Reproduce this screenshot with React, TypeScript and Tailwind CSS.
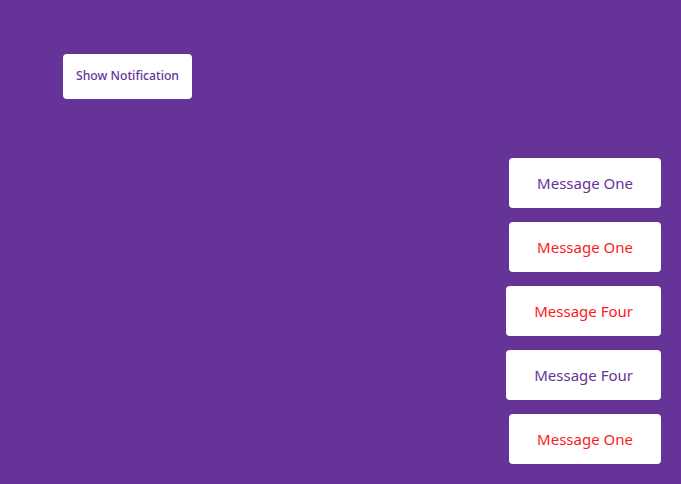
const toasts = [
  { text: "Message One", tone: "text-[#663399]" },
  { text: "Message One", tone: "text-[#ff1a1a]" },
  { text: "Message Four", tone: "text-[#ff1a1a]" },
  { text: "Message Four", tone: "text-[#663399]" },
  { text: "Message One", tone: "text-[#ff1a1a]" },
];

export default function App() {
  return (
    <div className="relative h-[484px] w-full overflow-hidden bg-[#663399] font-['Noto_Sans',sans-serif]">
      <div className="pl-[63px] pt-[54px]">
        <button className="h-[45px] w-[129px] rounded bg-white text-[12.2px] font-medium text-[#663399]">
          Show Notification
        </button>
      </div>

      {/* toast stack */}
      <div className="absolute bottom-5 right-5 flex flex-col items-end gap-[14px]">
        {toasts.map((t, i) => (
          <div
            key={i}
            className={`flex h-[50px] items-center rounded bg-white px-7 text-[15px] ${t.tone}`}
          >
            {t.text}
          </div>
        ))}
      </div>
    </div>
  );
}
